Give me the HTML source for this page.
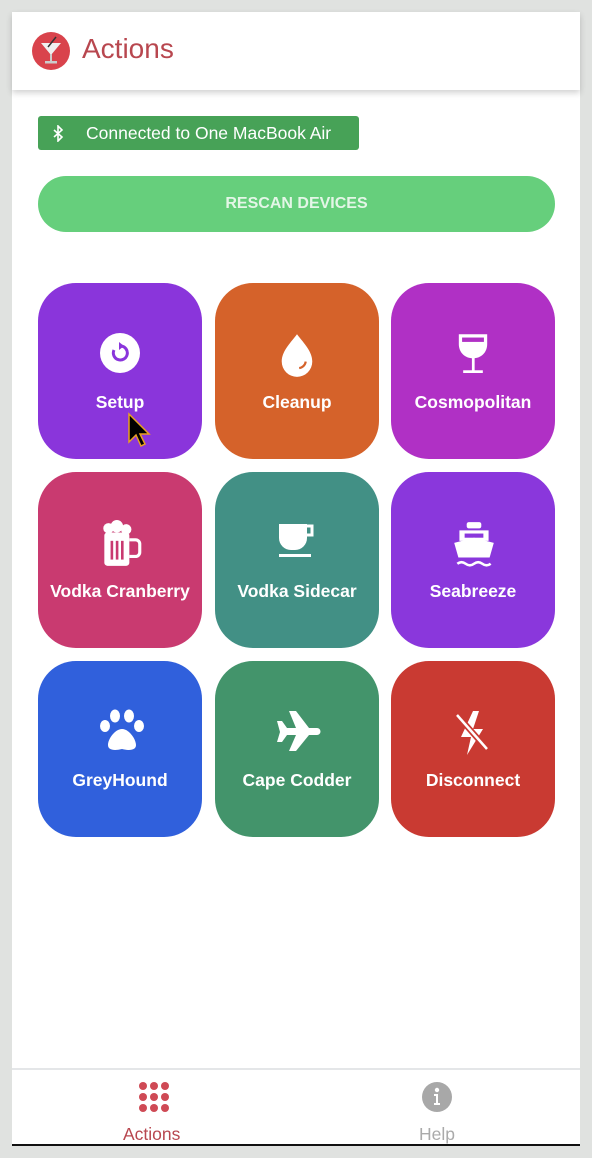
<!DOCTYPE html>
<html><head><meta charset="utf-8"><style>
*{margin:0;padding:0;box-sizing:border-box}
body{width:592px;height:1158px;background:#e0e2e0;font-family:"Liberation Sans",sans-serif;position:relative;overflow:hidden}
.panel{position:absolute;left:12px;top:12px;width:568px;height:1134px;background:#fff;border-bottom:2px solid #111}
.hdr{position:absolute;left:0;top:0;width:568px;height:78px;background:#fff;box-shadow:0 3px 6px rgba(0,0,0,.18)}
.logo{position:absolute;left:20px;top:20px;width:38px;height:38px;border-radius:50%;background:#d9434c}
.title{position:absolute;left:70px;top:21px;font-size:28px;color:#b8474f}
.badge{position:absolute;left:26px;top:104px;width:321px;height:34px;background:#47a257;border-radius:3px;color:#fff;font-size:17.5px;line-height:34px;padding-left:48px}
.bt{position:absolute;left:14px;top:9px}
.btn{position:absolute;left:26px;top:164px;width:517px;height:56px;background:#66cf7c;border-radius:28px;font-weight:bold;font-size:16px;text-align:center;line-height:56px;color:#e4f6e7}
.tile{position:absolute;width:164px;height:176px;border-radius:38px;color:#fff;text-align:center}
.tile svg{position:absolute;left:60px;top:48px}
.tile span{position:absolute;left:0;right:0;top:109px;font-size:17.5px;font-weight:bold}
.nav{position:absolute;left:0;top:1056px;width:568px;height:76px;border-top:2px solid #e4e6e8;background:#fff}
.ni{position:absolute;top:54px;font-size:17.5px}
</style></head><body>
<div class="panel">
<div class="hdr"><div class="logo"><svg width="38" height="38" viewBox="0 0 38 38"><path d="M9 11h20l-10 12z" fill="#f0f0f0"/><rect x="18" y="22" width="2" height="8" fill="#ccc"/><rect x="13" y="29" width="12" height="2.5" fill="#ccc"/><path d="M16 15l8-10" stroke="#333" stroke-width="1.5"/></svg></div><div class="title">Actions</div></div>
<div class="badge"><svg class="bt" width="12" height="17" viewBox="0 0 12 17"><path d="M2 5l8 7-4 4V1l4 4-8 7" stroke="#fff" stroke-width="1.6" fill="none"/></svg>Connected to One MacBook Air</div>
<div class="btn">RESCAN DEVICES</div>

<div class="tile" style="left:26px;top:271px;background:#8a35db"><svg width="44" height="44" viewBox="-2 -2 44 44"><circle cx="20" cy="20" r="20" fill="#fff"/><path d="M14 17a7 7 0 1 0 7-4" stroke="#8a35db" stroke-width="3" fill="none"/><path d="M19 9l5 4-5 4z" fill="#8a35db"/></svg><span>Setup</span></div>
<div class="tile" style="left:203px;top:271px;background:#d5622a"><svg width="44" height="48" viewBox="0 0 40 44"><path d="M20 3C13 12 6 19 6 28a14 14 0 0 0 28 0c0-9-7-16-14-25z" fill="#fff"/><path d="M28 28a7 7 0 0 1-6 6" stroke="#d5622a" stroke-width="2" fill="none"/></svg><span>Cleanup</span></div>
<div class="tile" style="left:379px;top:271px;background:#b030c5"><svg width="44" height="48" viewBox="0 0 40 44"><path d="M7 3h26v9c0 8-6 13-13 13S7 20 7 12z" fill="#fff"/><rect x="10" y="6" width="20" height="4" fill="#b030c5"/><rect x="19" y="24" width="2.5" height="13" fill="#fff"/><rect x="11" y="36" width="18" height="2.5" fill="#fff"/></svg><span>Cosmopolitan</span></div>

<div class="tile" style="left:26px;top:460px;background:#c93a70"><svg width="46" height="50" viewBox="0 0 44 48"><circle cx="10" cy="8" r="5" fill="#fff"/><circle cx="18" cy="6" r="6" fill="#fff"/><circle cx="27" cy="9" r="5" fill="#fff"/><rect x="6" y="12" width="24" height="32" rx="3" fill="#fff"/><path d="M30 19h6a4 4 0 0 1 4 4v8a4 4 0 0 1-4 4h-6" stroke="#fff" stroke-width="3" fill="none"/><rect x="12" y="20" width="2.5" height="18" fill="#c93a70"/><rect x="17" y="20" width="2.5" height="18" fill="#c93a70"/><rect x="22" y="20" width="2.5" height="18" fill="#c93a70"/></svg><span>Vodka Cranberry</span></div>
<div class="tile" style="left:203px;top:460px;background:#429085"><svg width="44" height="44" viewBox="0 0 44 44"><path d="M4 4h28v14a12 12 0 0 1-12 12h-4A12 12 0 0 1 4 18z" fill="#fff"/><path d="M32 6h5v9h-5" stroke="#fff" stroke-width="3" fill="none"/><rect x="4" y="34" width="32" height="3" fill="#fff"/></svg><span>Vodka Sidecar</span></div>
<div class="tile" style="left:379px;top:460px;background:#8a37dc"><svg width="46" height="50" viewBox="0 0 44 48"><rect x="15" y="2" width="14" height="6" rx="2" fill="#fff"/><path d="M8 10h28v10H8z" fill="#fff"/><rect x="13" y="13" width="18" height="4" fill="#8a37dc"/><path d="M3 22l19-5 19 5-4 14H7z" fill="#fff"/><path d="M6 42q4-3 8 0t8 0 8 0 8 0" stroke="#fff" stroke-width="2.5" fill="none"/></svg><span>Seabreeze</span></div>

<div class="tile" style="left:26px;top:649px;background:#3060dc"><svg width="48" height="44" viewBox="0 0 48 44"><ellipse cx="7" cy="17" rx="5" ry="6" fill="#fff"/><ellipse cx="17" cy="7" rx="5" ry="6.5" fill="#fff"/><ellipse cx="31" cy="7" rx="5" ry="6.5" fill="#fff"/><ellipse cx="41" cy="17" rx="5" ry="6" fill="#fff"/><path d="M24 20c-7 0-14 10-14 16 0 5 6 6 14 4 8 2 14 1 14-4 0-6-7-16-14-16z" fill="#fff"/></svg><span>GreyHound</span></div>
<div class="tile" style="left:203px;top:649px;background:#43946b"><svg width="48" height="44" viewBox="0 0 48 44"><path d="M2 12h5l5 7h9L14 2h7l13 17h8a3.5 3.5 0 0 1 0 7h-8L21 42h-7l7-16h-9l-5 7H2l3-10z" fill="#fff"/></svg><span>Cape Codder</span></div>
<div class="tile" style="left:379px;top:649px;background:#c93a32"><svg width="44" height="48" viewBox="0 0 44 48"><path d="M22 2l-12 26h10l-4 18 16-26H22l6-18z" fill="#fff"/><path d="M6 6l30 34" stroke="#c93a32" stroke-width="6"/><path d="M6 6l30 34" stroke="#fff" stroke-width="2.5"/></svg><span>Disconnect</span></div>

<div class="nav">
<svg style="position:absolute;left:126px;top:11px" width="32" height="32" viewBox="0 0 32 32"><g fill="#cf4a55"><circle cx="5" cy="5" r="4"/><circle cx="16" cy="5" r="4"/><circle cx="27" cy="5" r="4"/><circle cx="5" cy="16" r="4"/><circle cx="16" cy="16" r="4"/><circle cx="27" cy="16" r="4"/><circle cx="5" cy="27" r="4"/><circle cx="16" cy="27" r="4"/><circle cx="27" cy="27" r="4"/></g></svg>
<div class="ni" style="left:111px;color:#b8474f">Actions</div>
<svg style="position:absolute;left:410px;top:12px" width="30" height="30" viewBox="0 0 30 30"><circle cx="15" cy="15" r="15" fill="#a8a8a8"/><circle cx="15" cy="8" r="2.2" fill="#fff"/><path d="M12 12h4v9h2v2h-6v-2h2v-7h-2z" fill="#fff"/></svg>
<div class="ni" style="left:407px;color:#aaa">Help</div>
</div>
</div>
<svg style="position:absolute;left:127px;top:412px" width="24" height="36" viewBox="0 0 24 36"><path d="M2 2v28l7-7 5 11 4-2-5-10h9z" fill="#000" stroke="#e8a020" stroke-width="1.5"/></svg>
</body></html>
